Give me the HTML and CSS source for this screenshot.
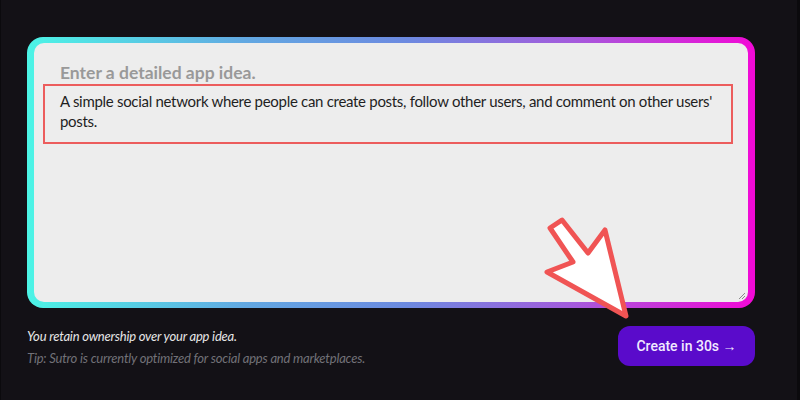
FILE: index.html
```html
<!DOCTYPE html>
<html lang="en">
<head>
  <meta charset="UTF-8" />
  <meta name="viewport" content="width=device-width, initial-scale=1.0"/>
  <title>Sutro - New App</title>
  <link rel="stylesheet" href="styles.css">
</head>
<body>

  <div class="page">
    <div class="prompt-frame">
      <div class="prompt">
        <div class="prompt-label">Enter a detailed app idea.</div>
        <div class="prompt-text">
          A simple social network where people can create posts, follow other users, and comment on other users' posts.
        </div>
        <svg class="grip" width="8" height="8" viewBox="0 0 8 8">
          <path d="M7 1 L1 7 M7 4 L4 7" stroke="#8a8a8a" stroke-width="1" />
        </svg>
      </div>
    </div>

    <div class="footer">
      <div class="notes">
        <p class="note">You retain ownership over your app idea.</p>
        <p class="tip">Tip: Sutro is currently optimized for social apps and marketplaces.</p>
      </div>
      <button class="create-btn">Create in 30s &rarr;</button>
    </div>

    <!-- annotation arrow pointing at the button -->
    <svg class="pointer" width="100" height="110" viewBox="540 212 100 110">
      <polygon points="550,228 562,220 588,253 605,230 626,316 547,272 573,262"
        fill="#ffffff" stroke="#f05454" stroke-width="5" stroke-linejoin="round" />
    </svg>
  </div>

</body>
</html>
```

FILE: styles.css
```css
html {
  background: #0b0a0d;
}

body {
  margin: 0;
  font-family: 'Lato', sans-serif;
  background-color: #131116;
  width: 796px;
  height: 400px;
  border-left: 1px solid #0b0a0d;
  overflow: hidden;
}

.page {
  position: relative;
  padding: 37px 42px 0 26px;
}

.prompt-frame {
  height: 271px;
  padding: 6px 7px;
  box-sizing: border-box;
  border-radius: 16px;
  background: linear-gradient(90deg, #4cf4e6 0%, #62a8e2 30%, #6c8ae0 52%, #a45bdc 75%, #f209d6 100%);
}

.prompt {
  position: relative;
  height: 100%;
  box-sizing: border-box;
  background: #ededed;
  border-radius: 10px;
  padding: 19px 15px 0 9px;
}

.prompt-label {
  padding-left: 17px;
  font-size: 17.5px;
  font-weight: bold;
  line-height: 22px;
  color: #999999;
}

.prompt-text {
  padding: 5px 10px 0 15px;
  border: 2px solid #ec5d5d;
  font-size: 15px;
  letter-spacing: -0.3px;
  line-height: 20px;
  color: #1f1f1f;
  height: 51px;
}

.grip {
  position: absolute;
  right: 2px;
  bottom: 2px;
}

.footer {
  display: flex;
  justify-content: space-between;
  align-items: flex-start;
  margin-top: 17px;
}

.notes p {
  margin: 0;
  font-size: 13px;
  font-style: italic;
  line-height: 22px;
  letter-spacing: -0.2px;
}

.note {
  color: #e6e6e6;
}

.tip {
  color: #727178;
}

.create-btn {
  width: 137px;
  height: 40px;
  margin-top: 1px;
  border: none;
  border-radius: 12px;
  background-color: #5a0bcb;
  color: #f1eaff;
  font-family: 'Roboto', sans-serif;
  font-size: 14px;
  font-weight: 500;
  cursor: pointer;
}

.create-btn:hover {
  background-color: #6614dc;
}

.pointer {
  position: absolute;
  left: 539px;
  top: 212px;
}
```
